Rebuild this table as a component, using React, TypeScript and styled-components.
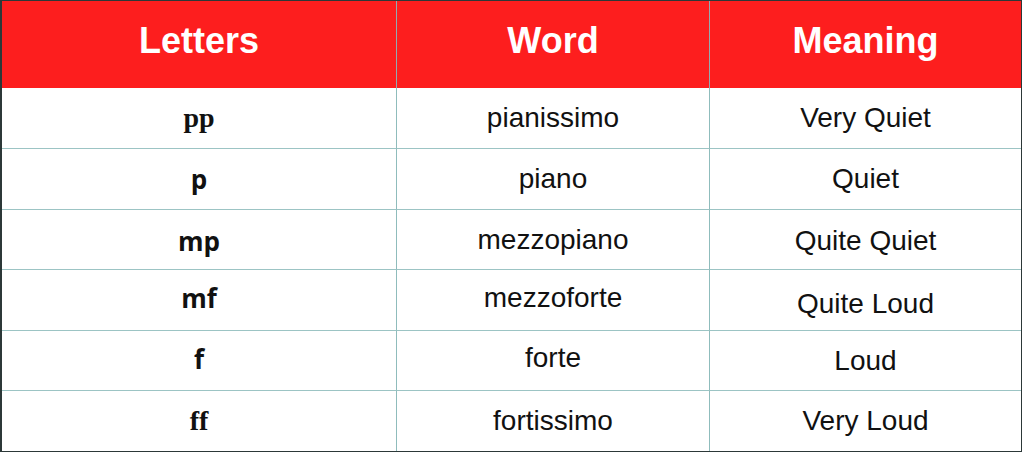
import React from "react";
import styled, { createGlobalStyle } from "styled-components";

const Global = createGlobalStyle`
  html, body { margin: 0; padding: 0; background: #ffffff; }
  body { font-family: "Liberation Sans", Arial, sans-serif; }
`;

const Frame = styled.div`
  box-sizing: border-box;
  width: 1022px;
  height: 452px;
  border-style: solid;
  border-color: #2c3838;
  border-width: 1px 1px 1px 2px;
  display: grid;
  grid-template-columns: 395px 313px 1fr;
  grid-template-rows: 87px 61px 61px 60px 61px 60px 60px;
  background: #ffffff;
`;

const HeadCell = styled.div<{ $last?: boolean }>`
  box-sizing: border-box;
  background: #fd1e1e;
  color: #ffffff;
  font-family: "Liberation Sans", Arial, sans-serif;
  font-weight: 700;
  font-size: 36px;
  display: flex;
  align-items: center;
  justify-content: center;
  padding-bottom: 8px;
  border-right: ${(p) => (p.$last ? "none" : "1px solid #93aab0")};
`;

type Kind = "serif" | "sans" | "plain";

const Cell = styled.div<{ $kind: Kind; $shift?: number; $last?: boolean; $bottom?: boolean }>`
  box-sizing: border-box;
  display: flex;
  align-items: center;
  justify-content: center;
  color: #111111;
  border-right: ${(p) => (p.$last ? "none" : "1px solid #8fbcbc")};
  border-bottom: ${(p) => (p.$bottom ? "none" : "1px solid #9cc4c4")};
  font-family: ${(p) =>
    p.$kind === "serif"
      ? `"Liberation Serif", "Times New Roman", serif`
      : p.$kind === "sans"
      ? `"Open Sans", Lato, sans-serif`
      : `"Liberation Sans", Arial, sans-serif`};
  font-weight: ${(p) => (p.$kind === "plain" ? 400 : 700)};
  font-size: ${(p) => (p.$kind === "sans" ? "26px" : "28px")};
  padding-top: ${(p) => (p.$shift && p.$shift > 0 ? p.$shift * 2 : 0)}px;
  padding-bottom: ${(p) => (p.$shift && p.$shift < 0 ? -p.$shift * 2 : 0)}px;
`;

const rows: { letters: string; kind: Kind; word: string; meaning: string; ls?: number; ws?: number; ms?: number }[] = [
  { letters: "pp", kind: "serif", word: "pianissimo", meaning: "Very Quiet" },
  { letters: "p", kind: "sans", word: "piano", meaning: "Quiet" },
  { letters: "mp", kind: "sans", word: "mezzopiano", meaning: "Quite Quiet", ls: 1, ms: 1 },
  { letters: "mf", kind: "sans", word: "mezzoforte", meaning: "Quite Loud", ls: -2, ws: -2, ms: 4 },
  { letters: "f", kind: "sans", word: "forte", meaning: "Loud", ls: -2, ws: -3 },
  { letters: "ff", kind: "serif", word: "fortissimo", meaning: "Very Loud" },
];

export default function App() {
  return (
    <>
      <Global />
      <Frame>
        <HeadCell>Letters</HeadCell>
        <HeadCell>Word</HeadCell>
        <HeadCell $last>Meaning</HeadCell>
        {rows.map((r, i) => {
          const bottom = i === rows.length - 1;
          return (
            <React.Fragment key={r.letters}>
              <Cell $kind={r.kind} $shift={r.ls} $bottom={bottom}>{r.letters}</Cell>
              <Cell $kind="plain" $shift={r.ws} $bottom={bottom}>{r.word}</Cell>
              <Cell $kind="plain" $shift={r.ms} $bottom={bottom} $last>{r.meaning}</Cell>
            </React.Fragment>
          );
        })}
      </Frame>
    </>
  );
}
